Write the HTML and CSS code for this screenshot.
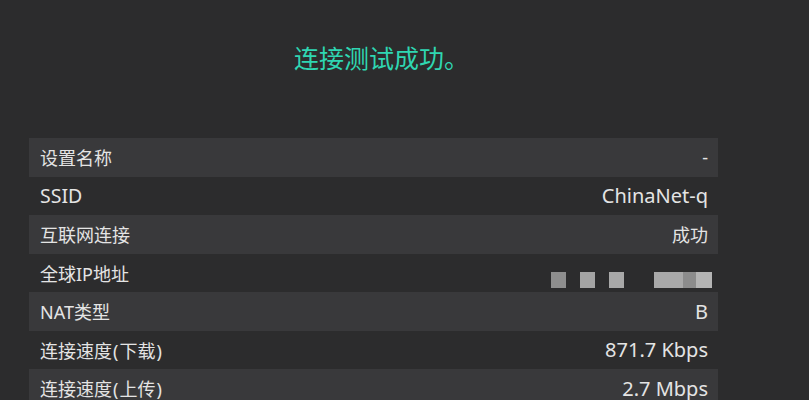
FILE: index.html
```html
<!DOCTYPE html>
<html lang="zh-CN">
<head>
<meta charset="utf-8">
<link rel="stylesheet" href="styles.css">
</head>
<body>
<div class="page">
  <h1 class="title">连接测试成功。</h1>
  <div class="panel">
    <div class="row alt"><span class="label">设置名称</span><span class="value">-</span></div>
    <div class="row"><span class="label lat">SSID</span><span class="value lat">ChinaNet-q</span></div>
    <div class="row alt"><span class="label">互联网连接</span><span class="value">成功</span></div>
    <div class="row"><span class="label">全球IP地址</span>
      <span class="mosaic">
        <span class="blk b1"></span><span class="blk b2"></span><span class="blk b3"></span><span class="gap"></span><span class="blk b4"></span>
      </span>
    </div>
    <div class="row alt"><span class="label">NAT类型</span><span class="value lat">B</span></div>
    <div class="row"><span class="label">连接速度<span class="par">(</span>下载<span class="par">)</span></span><span class="value lat">871.7 Kbps</span></div>
    <div class="row alt"><span class="label">连接速度<span class="par">(</span>上传<span class="par">)</span></span><span class="value lat">2.7 Mbps</span></div>
  </div>
</div>
</body>
</html>
```
FILE: styles.css
```css
html, body {
  margin: 0;
  padding: 0;
  background: #2c2c2d;
  overflow: hidden;
}
.page {
  width: 809px;
  height: 400px;
  font-family: "Noto Sans", "Noto Sans CJK SC", sans-serif;
  color: #e4e4e4;
}
.title {
  margin: 0;
  padding-top: 40px;
  padding-right: 46px;
  height: 96px;
  box-sizing: border-box;
  text-align: center;
  font-size: 25px;
  font-weight: 400;
  line-height: 34px;
  color: #2fd6b2;
  font-family: "Noto Sans CJK SC", sans-serif;
}
.panel {
  margin-top: 42px;
  margin-left: 29px;
  width: 689px;
}
.row {
  height: 38.5px;
  display: flex;
  align-items: center;
  justify-content: space-between;
  padding: 0 10px 0 11px;
  font-size: 18px;
}
.row.alt {
  background: #39393b;
}
.label {
  font-family: "Noto Sans", "Noto Sans CJK SC", sans-serif;
}
.label.lat {
  font-size: 19.5px;
}
.par {
  margin: 0 1px;
}
.value {
  font-family: "Noto Sans", "Noto Sans CJK SC", sans-serif;
}
.value.lat {
  font-size: 20px;
}
.mosaic {
  display: flex;
  align-items: center;
  gap: 14px;
  margin-right: -4px;
  margin-top: 14px;
}
.blk {
  display: block;
  height: 16px;
  background: #9a9a9a;
}
.b1 { width: 15px; background: #8e8e8e; }
.b2 { width: 15px; background: #a4a4a4; }
.b3 { width: 15px; background: #a8a8a8; }
.gap { width: 2px; }
.b4 {
  width: 58px;
  background: linear-gradient(90deg, #a9a9a9 0 50%, #8c8c8c 50% 72%, #b4b4b4 72% 100%);
}
```
